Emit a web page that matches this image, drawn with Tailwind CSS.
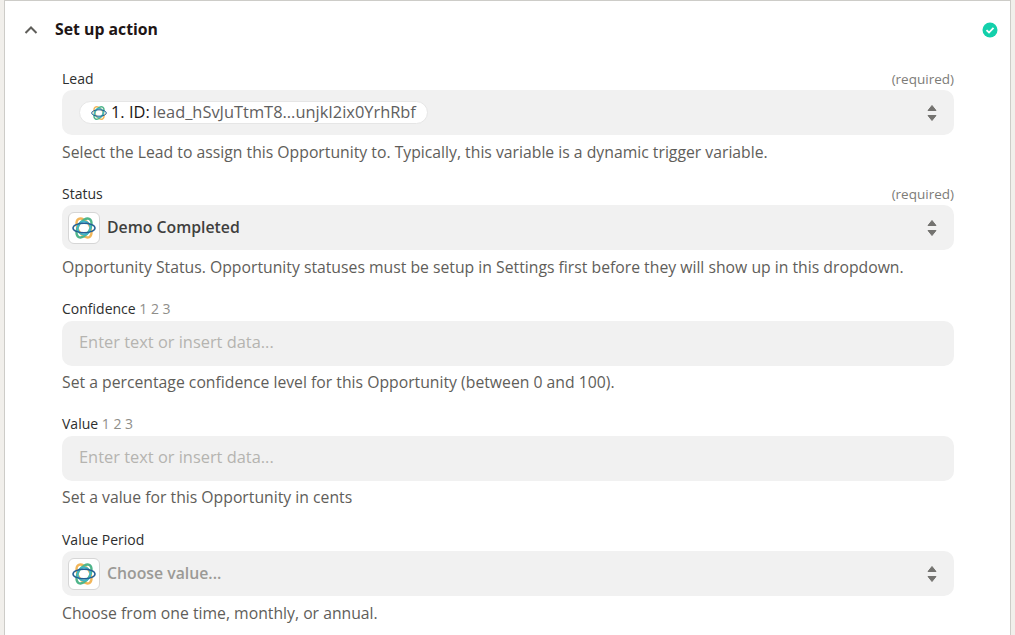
<!DOCTYPE html>
<html lang="en">
<head>
    <meta charset="UTF-8">
    <title>Set up action</title>
    <script src="https://cdn.jsdelivr.net/npm/@tailwindcss/browser@4"></script>
</head>
<body class="bg-[#f1efeb] font-['Open_Sans',sans-serif] overflow-hidden">
    <svg width="0" height="0" class="absolute">
        <symbol id="logo" viewBox="0 0 24 24">
            <g fill="none">
                <ellipse cx="12" cy="12" rx="6" ry="10.500" stroke="#f2b65a" stroke-width="2.300" transform="rotate(-32 12 12)"/>
                <ellipse cx="12" cy="12" rx="6" ry="10.500" stroke="#4fb58a" stroke-width="2.300" transform="rotate(32 12 12)"/>
                <circle cx="12" cy="12" r="6.500" stroke="#3fb6c9" stroke-width="1.800"/>
                <ellipse cx="12" cy="12" rx="11" ry="4.800" stroke="#245f94" stroke-width="1.500"/>
            </g>
        </symbol>
        <symbol id="stepper" viewBox="0 0 12 18">
            <path d="M6 1.500 10 6.500H2zM6 16.500 2 11.500H10z" fill="#747370" stroke="#747370" stroke-linejoin="round"/>
        </symbol>
    </svg>
    <div class="ml-1 w-[1007px] h-[635px] bg-white border-l border-t border-r border-[#cdccc8]">
        <div class="flex items-center h-[57px] pl-[18px] pr-[12px]">
            <svg class="w-4 h-4 text-[#5f5e5a]" viewBox="0 0 16 16" fill="none" stroke="currentColor" stroke-width="2"><path d="M2.500 11 8 5.500 13.500 11"/></svg>
            <h2 class="ml-[16px] text-[15.800px] font-bold text-[#201515]">Set up action</h2>
            <svg class="ml-auto w-4 h-4" viewBox="0 0 16 16"><circle cx="8" cy="8" r="7.500" fill="#13d0ab"/><path d="M4.500 8.200 7 10.500 11.500 5.800" fill="none" stroke="#fff" stroke-width="1.800"/></svg>
        </div>
        <div class="pl-[57px] w-[949px] mt-[11px]">
            <div class="h-[115px]">
                <div class="flex justify-between h-[21px] text-[14px] leading-[20px]">
                    <span class="font-medium text-[#2d2e2e]">Lead</span>
                    <span class="text-[#7d7c78] text-[13.500px]">(required)</span>
                </div>
                <div class="flex items-center h-[45px] rounded-[10px] bg-[#f1f1f1] pl-[17px] pr-[16px]">
                    <div class="flex items-center h-[23px] w-[349px] rounded-full bg-white border border-[#e6e6e6] pl-[11px] text-[16.400px] leading-[20px]">
                        <svg class="w-4 h-4 shrink-0"><use href="#logo"/></svg>
                        <span class="ml-[4px] mb-[1px] font-medium text-[#201515]">1. ID:</span>
                        <span class="ml-[3px] mb-[1px] font-medium text-[#5f6060]">lead_hSvJuTtmT8...unjkI2ix0YrhRbf</span>
                    </div>
                    <svg class="ml-auto w-3 h-[18px]"><use href="#stepper"/></svg>
                </div>
                <p class="mt-[7px] text-[15.750px] leading-[20px] text-[#5f5e5a]">Select the Lead to assign this Opportunity to. Typically, this variable is a dynamic trigger variable.</p>
            </div>
            <div class="h-[115px]">
                <div class="flex justify-between h-[21px] text-[14px] leading-[20px]">
                    <span class="font-medium text-[#2d2e2e]">Status</span>
                    <span class="text-[#7d7c78] text-[13.500px]">(required)</span>
                </div>
                <div class="flex items-center h-[45px] rounded-[10px] bg-[#f1f1f1] pl-[6px] pr-[16px]">
                    <div class="flex items-center justify-center w-8 h-8 rounded-md bg-white border border-[#d6d6d6]"><svg class="w-6 h-6"><use href="#logo"/></svg></div>
                    <span class="ml-[7px] pt-[1px] text-[15.800px] font-semibold text-[#403f3e]">Demo Completed</span>
                    <svg class="ml-auto w-3 h-[18px]"><use href="#stepper"/></svg>
                </div>
                <p class="mt-[7px] text-[15.750px] leading-[20px] text-[#5f5e5a]">Opportunity Status. Opportunity statuses must be setup in Settings first before they will show up in this dropdown.</p>
            </div>
            <div class="h-[115px]">
                <div class="h-[22px] text-[14px] leading-[20px]">
                    <span class="font-medium text-[#2d2e2e]">Confidence</span>
                    <span class="text-[14px] text-[#8f8e8a]">1 2 3</span>
                </div>
                <div class="flex items-center h-[45px] rounded-[10px] bg-[#f1f1f1] px-[17px] pb-[2px]">
                    <span class="text-[16.400px] text-[#b5b4b0]">Enter text or insert data...</span>
                </div>
                <p class="mt-[6px] text-[15.750px] leading-[20px] text-[#5f5e5a]">Set a percentage confidence level for this Opportunity (between 0 and 100).</p>
            </div>
            <div class="h-[116px]">
                <div class="h-[22px] text-[14px] leading-[20px]">
                    <span class="font-medium text-[#2d2e2e]">Value</span>
                    <span class="text-[14px] text-[#8f8e8a]">1 2 3</span>
                </div>
                <div class="flex items-center h-[45px] rounded-[10px] bg-[#f1f1f1] px-[17px] pb-[2px]">
                    <span class="text-[16.400px] text-[#b5b4b0]">Enter text or insert data...</span>
                </div>
                <p class="mt-[6px] text-[15.750px] leading-[20px] text-[#5f5e5a]">Set a value for this Opportunity in cents</p>
            </div>
            <div class="h-[115px]">
                <div class="h-[21px] text-[14px] leading-[20px]">
                    <span class="font-medium text-[#2d2e2e]">Value Period</span>
                </div>
                <div class="flex items-center h-[45px] rounded-[10px] bg-[#f1f1f1] pl-[6px] pr-[16px]">
                    <div class="flex items-center justify-center w-8 h-8 rounded-md bg-white border border-[#d6d6d6]"><svg class="w-6 h-6"><use href="#logo"/></svg></div>
                    <span class="ml-[7px] pt-[1px] text-[15.800px] font-semibold text-[#9b9a96]">Choose value...</span>
                    <svg class="ml-auto w-3 h-[18px]"><use href="#stepper"/></svg>
                </div>
                <p class="mt-[7px] text-[15.750px] leading-[20px] text-[#5f5e5a]">Choose from one time, monthly, or annual.</p>
            </div>
        </div>
    </div>
</body>
</html>
